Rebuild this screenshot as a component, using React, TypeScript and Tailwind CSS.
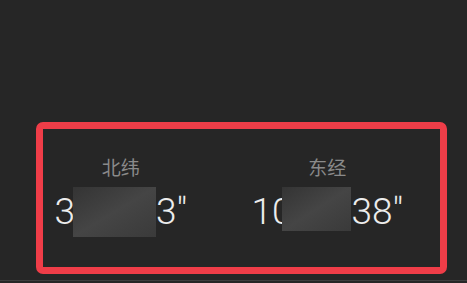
import React from 'react';

const cjk = { fontFamily: '"Noto Sans CJK SC", "Noto Sans", sans-serif' };
const num = { fontFamily: 'Roboto, "Noto Sans", sans-serif' };

function Masked({ w, h }: { w: string; h: string }) {
  return (
    <span
      className={`${w} ${h} inline-block self-start bg-gradient-to-br from-[#343434] via-[#454545] to-[#3a3a3a]`}
    />
  );
}

export default function App() {
  return (
    <div className="w-[467px] h-[283px] bg-[#262626] flex flex-col">
      <div className="flex-1 flex flex-col pt-[122px] px-[20px]">
        <div className="ml-[16px] w-[411px] h-[152px] rounded-[7px] border-[7px] border-[#ef3d48] flex pt-[26px]">
          {/* 北纬 */}
          <div className="w-[156px] flex flex-col items-center">
            <span style={cjk} className="text-[19px] leading-[24px] text-[#8a8a8a]">北纬</span>
            <div style={num} className="mt-[8px] flex text-[37px] font-light leading-[50px] text-[#ececec]">
              <span>3</span>
              <span className="-ml-[2px] flex">
                <Masked w="w-[83px]" h="h-[50px]" />
              </span>
              <span>3"</span>
            </div>
          </div>
          {/* 东经 */}
          <div className="ml-[16px] w-[226px] flex flex-col items-center">
            <span style={cjk} className="text-[19px] leading-[24px] text-[#8a8a8a]">东经</span>
            <div style={num} className="mt-[8px] flex text-[37px] font-light leading-[50px] text-[#ececec]">
              <span>10</span>
              <span className="-ml-[10px] flex">
                <Masked w="w-[69px]" h="h-[44px]" />
              </span>
              <span>38"</span>
            </div>
          </div>
        </div>
      </div>
      <div className="h-px bg-[#3e3e3e] mb-[2px]" />
    </div>
  );
}
